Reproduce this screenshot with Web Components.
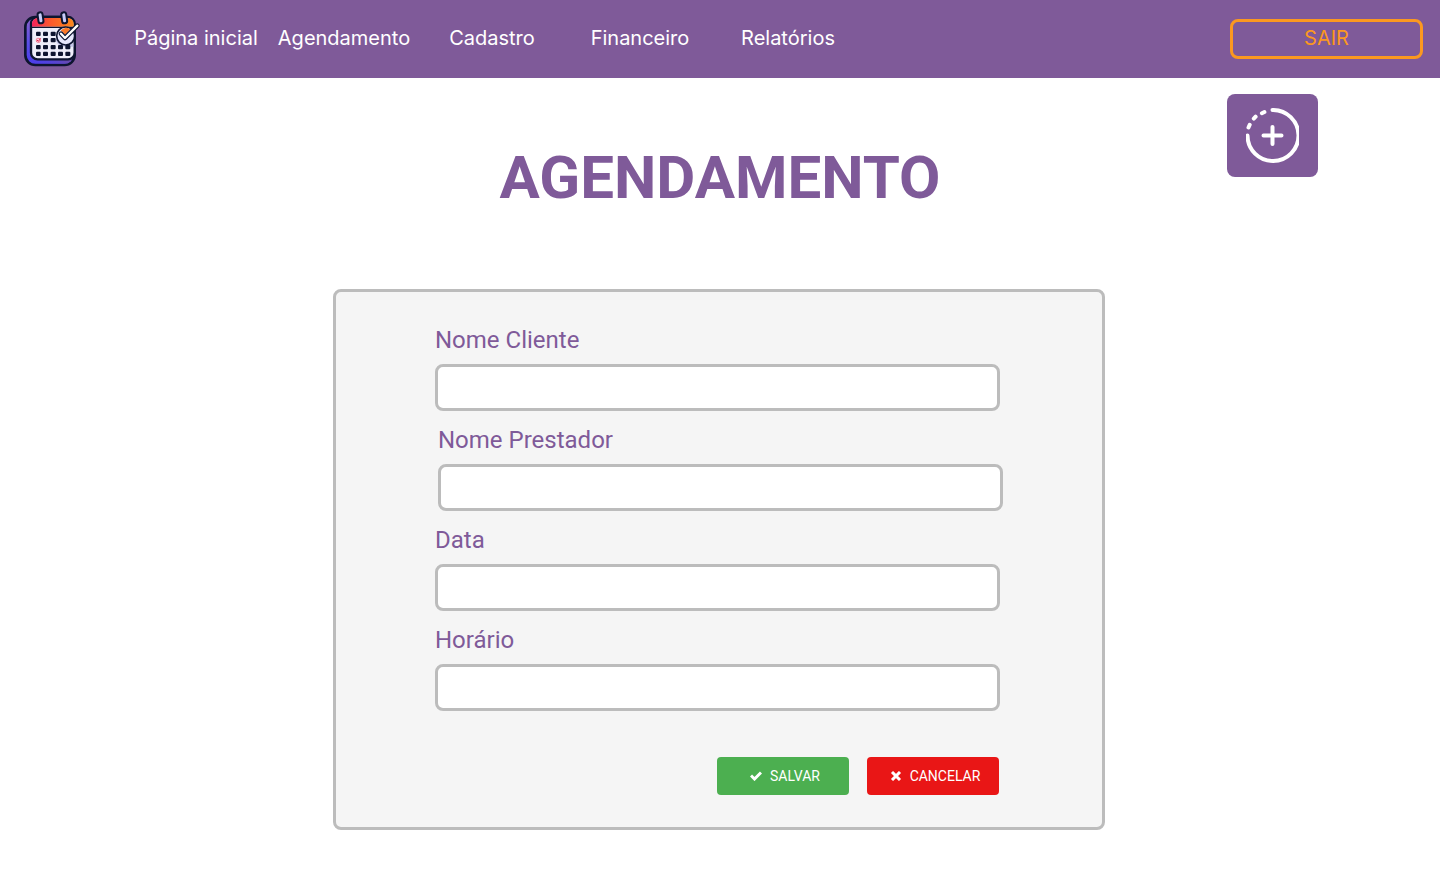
<!DOCTYPE html>
<html lang="pt-BR">
<head>
<meta charset="utf-8">
<meta name="viewport" content="width=device-width, initial-scale=1">
<title>Agendamento</title>
<style>
  :root {
    --purple: #7f5a99;
    --orange: #fb9820;
    --line: #bcbcbc;
    --surface: #f5f5f5;
    --green: #4caf50;
    --red: #e91616;
  }
  body { margin: 0; background: #fff; font-family: Roboto, sans-serif; color: var(--purple); }
</style>
</head>
<body>
<agenda-page></agenda-page>

<script>
const define = (name, html) => {
  const template = document.createElement('template');
  template.innerHTML = html;
  customElements.define(name, class extends HTMLElement {
    constructor() {
      super();
      this.attachShadow({ mode: 'open' }).append(template.content.cloneNode(true));
    }
  });
};

define('agenda-logo', `
  <style>
    :host { display: block; flex: none; }
    svg { display: block; }
  </style>
  <svg width="57" height="56" viewBox="42 33 171 168" role="img" aria-label="Agenda">
    <defs>
      <linearGradient id="side" x1="0" y1="0" x2="0" y2="1">
        <stop offset="0" stop-color="#8d62c8"/><stop offset=".55" stop-color="#5a4ee8"/><stop offset="1" stop-color="#4b3bea"/>
      </linearGradient>
      <linearGradient id="base" x1="0" y1="0" x2="1" y2="0">
        <stop offset="0" stop-color="#4b45f0" stop-opacity="0"/><stop offset="1" stop-color="#6c4ba0"/>
      </linearGradient>
      <linearGradient id="top" x1="0" y1="0" x2="1" y2="0">
        <stop offset="0" stop-color="#f5225c"/><stop offset=".45" stop-color="#fb5a2c"/><stop offset="1" stop-color="#fb8a1c"/>
      </linearGradient>
    </defs>
    <rect x="46" y="51" width="148" height="144" rx="30" fill="url(#side)" stroke="#0e1530" stroke-width="8"/>
    <rect x="50" y="55" width="140" height="136" rx="26" fill="url(#base)"/>
    <rect x="63" y="51" width="131" height="127" rx="20" fill="#eeeefa" stroke="#0e1530" stroke-width="7"/>
    <path d="M66 80V71a17 17 0 0 1 17-17h91a17 17 0 0 1 17 17v9z" fill="url(#top)"/>
    <path d="M66 82H191" stroke="#0e1530" stroke-width="4"/>
    <path d="M137 118q3 18 20 22h33v-9z" fill="#c5c7ea"/>
    <g fill="#0e1530">
      <rect x="78" y="95" width="14" height="13" rx="3"/><rect x="99" y="95" width="15" height="13" rx="3"/><rect x="122" y="95" width="15" height="13" rx="3"/>
      <rect x="99" y="114" width="15" height="13" rx="3"/><rect x="122" y="114" width="15" height="13" rx="3"/>
      <rect x="78" y="135" width="14" height="13" rx="3"/><rect x="99" y="135" width="15" height="13" rx="3"/><rect x="122" y="135" width="15" height="13" rx="3"/><rect x="144" y="135" width="15" height="13" rx="3"/><rect x="166" y="135" width="15" height="13" rx="3"/>
      <rect x="78" y="155" width="14" height="13" rx="3"/><rect x="99" y="155" width="15" height="13" rx="3"/><rect x="122" y="155" width="15" height="13" rx="3"/><rect x="144" y="155" width="15" height="13" rx="3"/><rect x="166" y="155" width="15" height="13" rx="3"/>
    </g>
    <rect x="79" y="115" width="12" height="12" rx="4" fill="#fbd0dc" stroke="#f0506e" stroke-width="2"/>
    <path d="M81 120l4 4 7-9" fill="none" stroke="#e22450" stroke-width="3"/>
    <g fill="#c9cdfa" stroke="#0e1530" stroke-width="6">
      <rect x="84" y="37" width="15" height="33" rx="7" transform="rotate(-8 91 53)"/>
      <rect x="155" y="37" width="15" height="33" rx="7" transform="rotate(-8 162 53)"/>
    </g>
    <circle cx="167" cy="108" r="27" fill="#e6e7fc" stroke="#0e1530" stroke-width="5"/>
    <path d="M152 92a20 20 0 0 1 29-4l-16 17-6-8z" fill="#fb7a28"/>
    <path d="M153 101l12 13 37-37" fill="none" stroke="#0e1530" stroke-width="14" stroke-linecap="round" stroke-linejoin="round"/>
    <path d="M153 101l12 13 37-37" fill="none" stroke="#fff" stroke-width="7" stroke-linecap="round" stroke-linejoin="round"/>
  </svg>`);

define('nav-link', `
  <style>
    :host { display: block; text-align: center; }
    a { color: #fff; text-decoration: none; white-space: nowrap; }
  </style>
  <a href="#"><slot></slot></a>`);

define('exit-button', `
  <style>
    :host { display: block; flex: none; }
    button {
      box-sizing: border-box; width: 193px; height: 40px; padding: 0 0 2px; display: block;
      background: none; border: 3px solid var(--orange); border-radius: 8px;
      color: var(--orange); font: inherit; cursor: pointer;
    }
  </style>
  <button type="button"><slot></slot></button>`);

define('app-header', `
  <style>
    :host {
      display: flex; align-items: center; box-sizing: border-box; height: 78px;
      padding: 0 17px 0 24px; background: var(--purple);
      font: 400 20px/24px Inter, sans-serif;
    }
    nav { display: grid; grid-template-columns: repeat(5, 148px); margin: 0 auto 2px 41px; }
  </style>
  <agenda-logo></agenda-logo>
  <nav aria-label="Principal">
    <nav-link>Página inicial</nav-link>
    <nav-link>Agendamento</nav-link>
    <nav-link>Cadastro</nav-link>
    <nav-link>Financeiro</nav-link>
    <nav-link>Relatórios</nav-link>
  </nav>
  <exit-button>SAIR</exit-button>`);

define('add-button', `
  <style>
    :host { display: block; }
    button {
      display: block; width: 91px; height: 83px; padding: 0; border: 0; border-radius: 8px;
      background: var(--purple); cursor: pointer;
    }
    svg { display: block; margin: 0 auto; }
  </style>
  <button type="button" aria-label="Novo agendamento">
    <svg width="53" height="55" viewBox="0 0 53 55" fill="none" stroke="#fff" stroke-width="4" stroke-linecap="round">
      <path d="M26.5 2A25.5 25.5 0 1 1 1.5 27.5"/>
      <path d="M26.5 19V36M17.5 27.5H35.5"/>
      <path d="M15.900 5.200L18.400 4M7.800 10.600L9.600 8.700M2.500 19.500L3.700 16.800"/>
    </svg>
  </button>`);

define('page-heading', `
  <style>
    :host { display: grid; grid-template-columns: 1fr auto 1fr; align-items: start; padding: 16px 122px 0; }
    h1 { grid-column: 2; margin: 48px 0 0; font-size: 60px; line-height: 72px; font-weight: 700; }
    add-button { justify-self: end; }
  </style>
  <h1><slot></slot></h1>
  <add-button></add-button>`);

define('form-field', `
  <style>
    :host { display: grid; gap: 10px; width: 565px; max-width: 100%; }
    label { font-size: 24px; line-height: 28px; }
    input {
      box-sizing: border-box; width: 100%; height: 47px; margin: 0; padding: 0 12px;
      border: 3px solid var(--line); border-radius: 8px; background: #fff;
      color: inherit; font: inherit; font-size: 20px;
    }
  </style>
  <label for="control"><slot></slot></label>
  <input id="control" type="text">`);

define('action-button', `
  <style>
    :host { display: block; }
    :host([kind="save"]) { --fill: var(--green); }
    :host([kind="cancel"]) { --fill: var(--red); }
    button {
      display: flex; align-items: center; justify-content: center; gap: 8px;
      width: 132px; height: 38px; padding: 0 0 0 4px; border: 0; border-radius: 4px;
      background: var(--fill); color: #fff; font: 400 14px/16px Roboto, sans-serif; cursor: pointer;
    }
  </style>
  <button type="button"><slot name="icon"></slot><slot></slot></button>`);

define('schedule-form', `
  <style>
    :host { display: block; padding: 75px 122px 48px 120px; }
    form {
      box-sizing: border-box; width: 772px; max-width: 100%; margin: 0 auto; padding: 34px 99px 32px;
      display: grid; gap: 15px; background: var(--surface);
      border: 3px solid var(--line); border-radius: 8px;
    }
    .indented { justify-self: end; }
    .actions { display: flex; justify-content: flex-end; gap: 18px; padding: 31px 4px 0 0; }
    svg { display: block; }
  </style>
  <form>
    <form-field>Nome Cliente</form-field>
    <form-field class="indented">Nome Prestador</form-field>
    <form-field>Data</form-field>
    <form-field>Horário</form-field>
    <div class="actions">
      <action-button kind="save">
        <svg slot="icon" width="12" height="10" viewBox="0 0 12 10" fill="none" stroke="#fff" stroke-width="3" aria-hidden="true"><path d="M1 4.5L4.500 8L11 1.500"/></svg>SALVAR</action-button>
      <action-button kind="cancel">
        <svg slot="icon" width="12" height="10" viewBox="0 0 12 10" fill="none" stroke="#fff" stroke-width="3" aria-hidden="true"><path d="M2 1L10 9M10 1L2 9"/></svg>CANCELAR</action-button>
    </div>
  </form>`);

define('agenda-page', `
  <style>
    :host { display: block; }
    main { display: block; }
  </style>
  <app-header></app-header>
  <main>
    <page-heading>AGENDAMENTO</page-heading>
    <schedule-form></schedule-form>
  </main>`);
</script>
</body>
</html>
